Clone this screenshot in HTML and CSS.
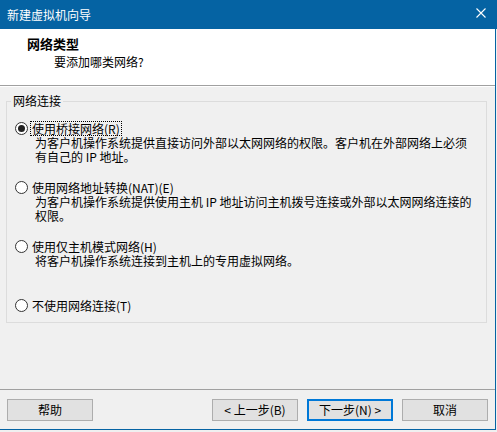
FILE: index.html
```html
<!DOCTYPE html>
<html lang="zh-CN">
<head>
    <meta charset="UTF-8">
    <meta name="viewport" content="width=device-width, initial-scale=1.0">
    <title>新建虚拟机向导</title>
    <link rel="stylesheet" href="styles.css">
</head>
<body>
    <div class="dialog">
        <div class="titlebar">
            <span class="titleText">新建虚拟机向导</span>
            <svg class="closeIcon" width="10" height="10" viewBox="0 0 10 10">
                <path d="M0.5 0.5 L9.5 9.5 M9.5 0.5 L0.5 9.5" stroke="#fff" stroke-width="1.1" fill="none"/>
            </svg>
        </div>
        <div class="frame">
            <div class="header">
                <div class="headerTitle">网络类型</div>
                <div class="headerSub">要添加哪类网络?</div>
            </div>

            <div class="content">
                <fieldset class="group">
                    <legend>网络连接</legend>

                    <div class="option">
                        <label class="optionLabel">
                            <input type="radio" name="net" checked>
                            <span class="focused">使用桥接网络(R)</span>
                        </label>
                        <div class="optionDesc">为客户机操作系统提供直接访问外部以太网网络的权限。客户机在外部网络上必须有自己的 IP 地址。</div>
                    </div>

                    <div class="option">
                        <label class="optionLabel">
                            <input type="radio" name="net">
                            <span>使用网络地址转换(NAT)(E)</span>
                        </label>
                        <div class="optionDesc">为客户机操作系统提供使用主机 IP 地址访问主机拨号连接或外部以太网网络连接的权限。</div>
                    </div>

                    <div class="option">
                        <label class="optionLabel">
                            <input type="radio" name="net">
                            <span>使用仅主机模式网络(H)</span>
                        </label>
                        <div class="optionDesc">将客户机操作系统连接到主机上的专用虚拟网络。</div>
                    </div>

                    <div class="option last">
                        <label class="optionLabel">
                            <input type="radio" name="net">
                            <span>不使用网络连接(T)</span>
                        </label>
                    </div>
                </fieldset>
            </div>

            <div class="footer">
                <button class="btn">帮助</button>
                <div class="spacer"></div>
                <button class="btn">&lt; 上一步(B)</button>
                <button class="btn default">下一步(N) &gt;</button>
                <button class="btn">取消</button>
            </div>
        </div>
    </div>
</body>
</html>
```

FILE: styles.css
```css
* {
    box-sizing: border-box;
}

body {
    margin: 0;
    background-color: #f0f0f0;
    font-family: "Noto Sans CJK SC", "Microsoft YaHei", sans-serif;
    font-size: 12px;
    color: #000;
}

.dialog {
    width: 497px;
}

.titlebar {
    height: 29px;
    background-color: #0563a3;
    color: #fff;
    display: flex;
    align-items: center;
    justify-content: space-between;
    padding: 0 11px 0 7px;
    line-height: 14px;
}

.closeIcon {
    display: block;
    margin-top: -3px;
}

.frame {
    width: 496px;
    height: 401px;
    border-right: 1px solid #0563a3;
    border-bottom: 1px solid #0563a3;
    display: flex;
    flex-direction: column;
}

.header {
    height: 57px;
    background-color: #fff;
    border-bottom: 1px solid #a0a0a0;
    box-shadow: 0 1px 0 #fff;
    padding: 7px 0 0 27px;
}

.headerTitle {
    font-size: 13px;
    font-weight: bold;
    line-height: 16px;
}

.headerSub {
    margin: 3px 0 0 27px;
    line-height: 14px;
}

.content {
    flex: 1;
    padding: 8px 8px 0 6px;
}

.group {
    margin: 0;
    border: 1px solid #dcdcdc;
    padding: 0 6px 9px 8px;
}

.group legend {
    margin-left: -4px;
    padding: 0 2px;
    line-height: 14px;
}

.option {
    height: 59px;
}

.option:first-of-type {
    margin-top: 12px;
}

.option.last {
    height: 16px;
}

.optionLabel {
    display: flex;
    align-items: center;
    height: 16px;
}

.optionLabel input {
    appearance: none;
    -webkit-appearance: none;
    width: 13px;
    height: 13px;
    margin: 0 2px 0 0;
    border: 1px solid #333;
    border-radius: 50%;
    background-color: #fff;
    display: grid;
    place-content: center;
}

.optionLabel input:checked::before {
    content: "";
    width: 7px;
    height: 7px;
    border-radius: 50%;
    background-color: #222;
}

.optionLabel span {
    display: inline-block;
    line-height: 13px;
    padding: 0 1px;
    border: 1px dotted transparent;
}

.optionLabel span.focused {
    border-color: #000;
}

.optionDesc {
    max-width: 442px;
    margin-left: 20px;
    line-height: 14px;
    min-height: 28px;
}

.footer {
    height: 40px;
    border-top: 1px solid #a0a0a0;
    padding: 9px 7px 0 7px;
    display: flex;
    gap: 9px;
}

.spacer {
    flex: 1;
}

.btn {
    width: 86px;
    height: 22px;
    padding: 0;
    font-family: inherit;
    font-size: 12px;
    line-height: 14px;
    color: #000;
    background-color: #e1e1e1;
    border: 1px solid #adadad;
}

.btn.default {
    border: 2px solid #0078d7;
}
```
